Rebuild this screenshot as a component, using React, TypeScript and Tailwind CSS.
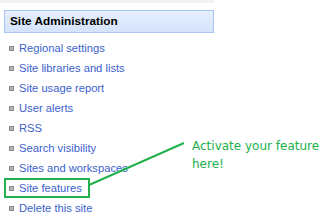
const links = [
  'Regional settings',
  'Site libraries and lists',
  'Site usage report',
  'User alerts',
  'RSS',
  'Search visibility',
  'Sites and workspaces',
  'Site features',
  'Delete this site',
];

export default function App() {
  return (
    <div className="relative w-[335px] h-[224px] bg-white overflow-hidden" style={{ fontFamily: '"Liberation Sans", Arial, sans-serif' }}>
      <div className="h-[3px] w-[215px] bg-[#f3f3f3]" />
      <div className="mt-[7px] ml-[4px] w-[210px] h-[23px] border border-[#a9c6f4] bg-gradient-to-b from-[#e6effd] to-[#d4e3fb] flex items-center pl-[5px]">
        <span className="text-[11.8px] font-bold text-black">Site Administration</span>
      </div>
      <ul className="mt-[5px]">
        {links.map((l) => (
          <li key={l} className="relative h-5 flex items-center pl-[9px]">
            <span className="w-[5px] h-[5px] bg-[#b4b4b4] border border-[#8a8a8a] mr-[5px]" />
            <span className="text-[11.2px] text-[#3a5fcd]">{l}</span>
            {l === 'Site features' && (
              <span className="absolute left-[4px] top-[0px] w-[86px] h-[20px] border-2 border-[#22b14c]" />
            )}
          </li>
        ))}
      </ul>
      <svg className="absolute left-0 top-0" width="335" height="224">
        <line x1="89" y1="185" x2="184" y2="143" stroke="#22b14c" strokeWidth="2" />
      </svg>
      <div className="absolute left-[192px] top-[137px] text-[12px] leading-[18px] text-[#22b14c]" style={{ fontFamily: '"DejaVu Sans", sans-serif' }}>
        <div>Activate your feature</div>
        <div>here!</div>
      </div>
    </div>
  );
}
